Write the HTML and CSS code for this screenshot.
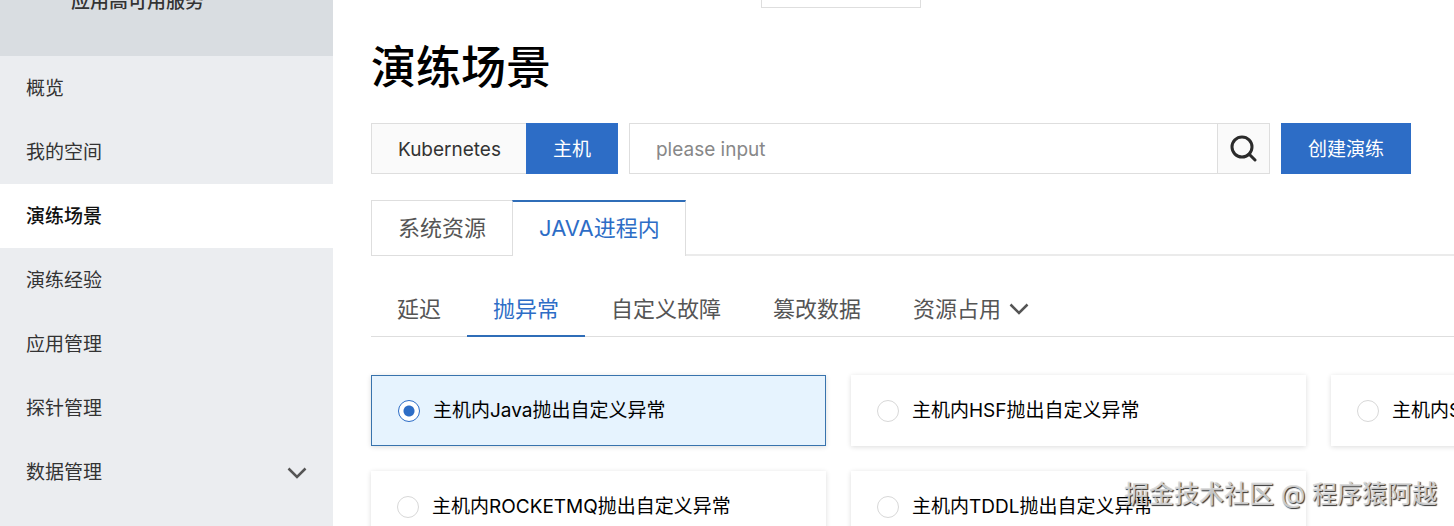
FILE: index.html
```
<!DOCTYPE html>
<html lang="zh-CN">
<head>
    <meta charset="utf-8">
    <title>演练场景</title>
    <link rel="stylesheet" href="styles.css">
</head>
<body>
<aside class="sidebar">
    <div class="sidebar-title">应用高可用服务</div>
    <nav class="menu">
        <a class="menu-item" href="#">概览</a>
        <a class="menu-item" href="#">我的空间</a>
        <a class="menu-item active" href="#">演练场景</a>
        <a class="menu-item" href="#">演练经验</a>
        <a class="menu-item" href="#">应用管理</a>
        <a class="menu-item" href="#">探针管理</a>
        <a class="menu-item" href="#">数据管理
            <svg class="arrow" viewBox="0 0 20 12"><path d="M1.5 1.5 L10 10 L18.5 1.5"/></svg>
        </a>
    </nav>
</aside>
<main class="content">
    <div class="topbar"><div class="topbar-box"></div></div>
    <h1>演练场景</h1>
    <form class="toolbar">
        <div class="switch">
            <button type="button" class="switch-item">Kubernetes</button>
            <button type="button" class="switch-item active">主机</button>
        </div>
        <div class="search">
            <input class="search-input" type="text" placeholder="please input" aria-label="search">
            <button type="button" class="search-button" aria-label="search">
                <svg viewBox="0 0 28 28"><circle cx="13" cy="12" r="10"/><path d="M20 19 L26 25"/></svg>
            </button>
        </div>
        <button type="button" class="create">创建演练</button>
    </form>
    <div class="tabs">
        <button class="tab">系统资源</button>
        <button class="tab active">JAVA进程内</button>
    </div>
    <div class="subtabs">
        <button class="subtab">延迟</button>
        <button class="subtab active">抛异常</button>
        <button class="subtab">自定义故障</button>
        <button class="subtab">篡改数据</button>
        <button class="subtab">资源占用
            <svg class="arrow" viewBox="0 0 20 12"><path d="M1.5 1.5 L10 10 L18.5 1.5"/></svg>
        </button>
    </div>
    <div class="cards">
        <label class="card selected"><input type="radio" name="scene" checked>主机内Java抛出自定义异常</label>
        <label class="card"><input type="radio" name="scene">主机内HSF抛出自定义异常</label>
        <label class="card"><input type="radio" name="scene">主机内S</label>
        <label class="card"><input type="radio" name="scene">主机内ROCKETMQ抛出自定义异常</label>
        <label class="card"><input type="radio" name="scene">主机内TDDL抛出自定义异常</label>
    </div>
</main>
<div class="watermark">掘金技术社区 @ 程序猿阿越</div>
</body>
</html>
```

FILE: styles.css
```
* {
    box-sizing:border-box;
}

body {
    display:flex;
    height:100vh;
    margin:0;
    overflow:hidden;
    position:relative;
    background:#FFFFFF;
    color:#000000;
    font-family:"Inter", "Noto Sans CJK SC", sans-serif;
    font-size:19px;
    line-height:28px;
}

button, input {
    margin:0;
    padding:0;
    border:0;
    border-radius:0;
    background:none;
    font:inherit;
    color:inherit;
}

svg {
    display:block;
    fill:none;
    stroke:currentColor;
}

/* sidebar, header partly scrolled out of view */

.sidebar {
    flex:none;
    width:333px;
    background:#EBEDF0;
}

.sidebar-title {
    display:flex;
    align-items:center;
    height:110px;
    margin-top:-54px;
    padding-top:2px;
    padding-left:71px;
    background:#D9DDE1;
    color:#333333;
    font-weight:500;
}

.menu-item {
    display:flex;
    align-items:center;
    justify-content:space-between;
    height:64px;
    padding:2px 26px 0;
    color:#333333;
    text-decoration:none;
}

.menu-item.active {
    background:#FFFFFF;
    color:#111111;
    font-weight:500;
}

.arrow {
    width:20px;
    height:12px;
    color:#555555;
    stroke-width:2.5;
}

/* content */

.content {
    flex:1;
    min-width:0;
    padding-left:38px;
    overflow:hidden;
}

.topbar {
    height:8px;
    padding-left:390px;
}

.topbar-box {
    width:160px;
    height:8px;
    border:1px solid #DEDEDE;
    border-top:0;
}

h1 {
    margin:28px 0 23px;
    font-size:45px;
    line-height:64px;
    font-weight:500;
}

.toolbar {
    display:flex;
    gap:11px;
    height:51px;
    margin-right:43px;
}

.switch {
    display:flex;
}

.switch-item {
    padding:2px 26px 0;
    border:1px solid #DEDEDE;
    border-right:0;
    background:#FAFAFA;
    color:#333333;
}

.switch-item.active {
    margin-left:-1px;
    border:1px solid #2F6FC9;
    background:#2D6DC6;
    color:#FFFFFF;
}

.search {
    display:flex;
    flex:1;
    border:1px solid #DEDEDE;
}

.search-input {
    flex:1;
    min-width:0;
    padding:2px 26px 0;
}

.search-input::placeholder {
    color:#888888;
    opacity:1;
}

.search-button {
    display:flex;
    align-items:center;
    justify-content:center;
    width:52px;
    border-left:1px solid #DEDEDE;
    background:#FAFAFA;
    color:#2B2B2B;
}

.search-button svg {
    width:28px;
    height:28px;
    stroke-width:3;
    stroke-linecap:round;
}

.create {
    padding:2px 27px 0;
    background:#2D6DC6;
    color:#FFFFFF;
}

.tabs {
    display:flex;
    height:56px;
    margin-top:26px;
    border-bottom:2px solid #EBEBEB;
    font-size:22px;
}

.tab {
    height:56px;
    padding:0 26px;
    border:1px solid #DEDEDE;
    border-right:0;
    background:#FFFFFF;
    color:#555555;
}

.tab.active {
    padding:0 25px 2px 26px;
    border-top:2px solid #2F6DB8;
    border-right:1px solid #DEDEDE;
    border-bottom:0;
    color:#2D6DC6;
}

.subtabs {
    display:flex;
    height:55px;
    margin-top:26px;
    border-bottom:1px solid #DEDEDE;
    font-size:22px;
}

.subtab {
    display:flex;
    align-items:center;
    gap:8px;
    height:55px;
    padding:0 26px;
    border-bottom:2px solid transparent;
    color:#555555;
}

.subtab.active {
    border-bottom-color:#2F6DB8;
    color:#2D6DC6;
}

.cards {
    display:grid;
    grid-template-columns:repeat(3, 455px);
    gap:25px;
    margin-top:38px;
    margin-left:-8px;
    padding-left:8px;
}

.card {
    display:flex;
    align-items:center;
    gap:13px;
    height:71px;
    padding:0 26px;
    background:#FFFFFF;
    box-shadow:0 1px 5px rgba(0, 0, 0, 0.14);
    white-space:nowrap;
}

.card.selected {
    border:1px solid #3873AD;
    background:#E6F3FE;
}

.card input {
    appearance:none;
    flex:none;
    width:22px;
    height:22px;
    border:1px solid #D8D8D8;
    border-radius:50%;
    background:#FFFFFF;
}

.card input:checked {
    border-color:#2D6DC6;
    background:radial-gradient(circle, #2D6DC6 0 5px, #FFFFFF 6px);
}

.watermark {
    position:absolute;
    right:17px;
    bottom:14px;
    color:rgba(218, 218, 218, 0.9);
    font-size:25px;
    line-height:36px;
    font-weight:500;
    text-shadow:1px 1px 1px rgba(0, 0, 0, 0.8);
}
```
